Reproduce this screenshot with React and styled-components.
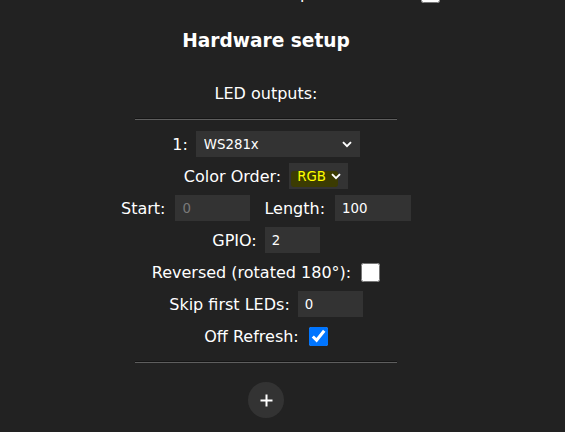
import React from "react";
import styled, { createGlobalStyle } from "styled-components";

const Global = createGlobalStyle`
  html, body { margin: 0; padding: 0; background: #222; }
  body { font-family: "DejaVu Sans", Verdana, sans-serif; color: #fff; }
`;

const Page = styled.div`
  width: 532px;
  display: flex;
  flex-direction: column;
  align-items: center;
  text-align: center;
`;

const ClipTop = styled.div`
  height: 3px;
  align-self: stretch;
  overflow: hidden;
  display: flex;
  flex-direction: column;
  justify-content: flex-end;
  align-items: center;
`;

const Title = styled.h2`
  margin: 27px 0 0;
  font-size: 18.6px;
  font-weight: bold;
  line-height: normal;
`;

const Subtitle = styled.h3`
  margin: 33px 0 0;
  font-size: 16px;
  font-weight: normal;
  line-height: normal;
`;

const Rule = styled.hr`
  width: 262px;
  height: 0;
  margin: ${(p) => p.$top}px auto 0;
  border: none;
  border-top: 1px solid #151515;
  border-bottom: 1px solid #5e5e5e;
  box-sizing: border-box;
  align-self: center;
`;

const Rows = styled.div`
  margin-top: 11px;
  display: flex;
  flex-direction: column;
  align-items: center;
  gap: 6px;
`;

const Row = styled.div`
  height: 26px;
  display: flex;
  align-items: center;
  gap: ${(p) => p.$gap || 8}px;
  font-size: 16px;
  white-space: nowrap;
`;

const Group = styled.div`
  display: flex;
  align-items: center;
  gap: 10px;
`;

const TextInput = styled.input`
  box-sizing: border-box;
  width: ${(p) => p.$w}px;
  height: 26px;
  margin: 0;
  padding: 0 0 0 7px;
  border: none;
  border-radius: 0;
  outline: none;
  background: #333;
  color: ${(p) => (p.disabled ? "#7a7a7a" : "#fff")};
  font-family: "DejaVu Sans", Verdana, sans-serif;
  font-size: 13.333px;
`;

const SelectBox = styled.div`
  position: relative;
  box-sizing: border-box;
  width: ${(p) => p.$w}px;
  height: 26px;
  background: #333;
  display: flex;
  align-items: center;
`;

const Highlight = styled.span`
  position: absolute;
  left: 2px;
  top: 8px;
  width: 47px;
  height: 16px;
  border-radius: 3px;
  background: #3b3b02;
`;

const NativeSelect = styled.select`
  position: relative;
  appearance: none;
  -webkit-appearance: none;
  box-sizing: border-box;
  width: 100%;
  height: 100%;
  margin: 0;
  padding: 0 0 0 ${(p) => p.$pad}px;
  border: none;
  outline: none;
  background: transparent;
  color: ${(p) => p.$color};
  font-family: "DejaVu Sans", Verdana, sans-serif;
  font-size: 13.333px;
`;

const Chevron = styled.svg`
  position: absolute;
  right: ${(p) => p.$right}px;
  top: 10px;
  width: 10px;
  height: 7px;
  pointer-events: none;
`;

const Check = styled.input`
  width: 19px;
  height: 19px;
  margin: 0;
  accent-color: #0075ff;
`;

const AddButton = styled.button`
  margin-top: 19px;
  width: 36px;
  height: 36px;
  border-radius: 50%;
  border: none;
  padding: 0;
  background: #333;
  display: flex;
  align-items: center;
  justify-content: center;
  cursor: pointer;
`;

const ChevronIcon = ({ right }) => (
  <Chevron $right={right} viewBox="0 0 10 7">
    <path d="M1 1.2 L5 5.2 L9 1.2" fill="none" stroke="#fff" strokeWidth="1.9" />
  </Chevron>
);

const Select = ({ w, pad = 8, color = "#fff", highlight, chevronRight = 8, children }) => (
  <SelectBox $w={w}>
    {highlight && <Highlight />}
    <NativeSelect $pad={pad} $color={color}>{children}</NativeSelect>
    <ChevronIcon right={chevronRight} />
  </SelectBox>
);

export default function App() {
  return (
    <>
      <Global />
      <Page>
        <ClipTop>
          <Row $gap={10}>
            <span>Enable automatic current power limiter:</span>
            <Check type="checkbox" readOnly />
          </Row>
        </ClipTop>
        <Title>Hardware setup</Title>
        <Subtitle>LED outputs:</Subtitle>
        <Rule $top={15} />
        <Rows>
          <Row>
            <span>1:</span>
            <Select w={164}>
              <option>WS281x</option>
            </Select>
          </Row>
          <Row>
            <span>Color Order:</span>
            <Select w={59} color="#ffff00" highlight chevronRight={7}>
              <option>RGB</option>
            </Select>
          </Row>
          <Row $gap={14}>
            <Group>
              <span>Start:</span>
              <TextInput $w={75} defaultValue="0" disabled />
            </Group>
            <Group>
              <span>Length:</span>
              <TextInput $w={76} defaultValue="100" />
            </Group>
          </Row>
          <Row>
            <span>GPIO:</span>
            <TextInput $w={55} defaultValue="2" />
          </Row>
          <Row $gap={10}>
            <span>Reversed (rotated 180°):</span>
            <Check type="checkbox" />
          </Row>
          <Row>
            <span>Skip first LEDs:</span>
            <TextInput $w={65} defaultValue="0" />
          </Row>
          <Row $gap={10}>
            <span>Off Refresh:</span>
            <Check type="checkbox" defaultChecked />
          </Row>
        </Rows>
        <Rule $top={12} />
        <AddButton aria-label="Add output">
          <svg width="13" height="13" viewBox="0 0 13 13">
            <path d="M0.5 6.5 H12.5 M6.5 0.5 V12.5" stroke="#fff" strokeWidth="2" fill="none" />
          </svg>
        </AddButton>
      </Page>
    </>
  );
}
